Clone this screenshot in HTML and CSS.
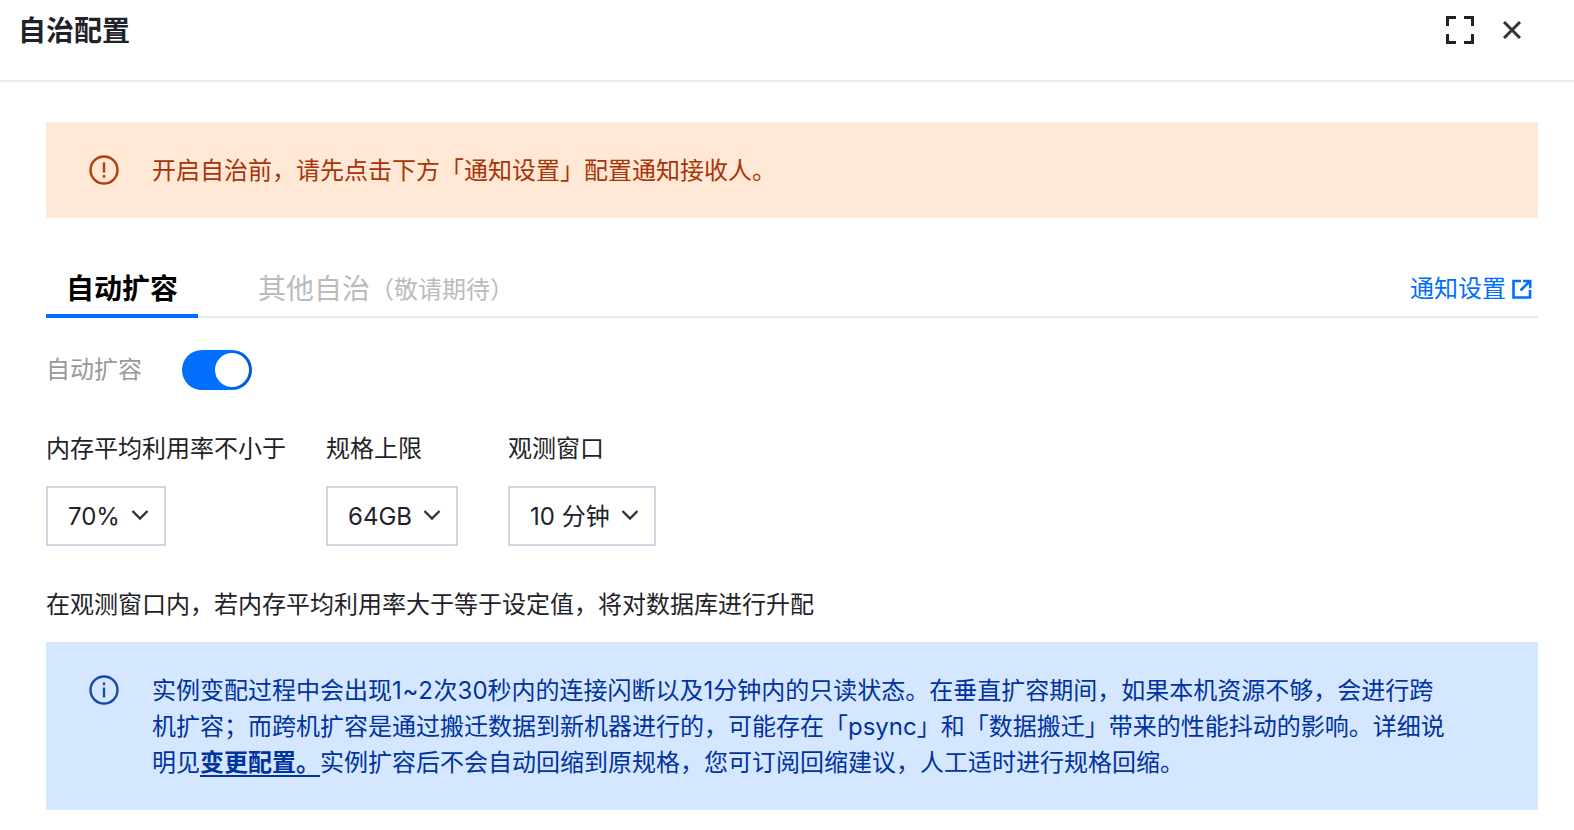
FILE: index.html
```html
<!DOCTYPE html>
<html>
<head>
    <title>自治配置</title>
    <link rel="stylesheet" href="styles.css">
</head>
<body>
    <div class="header">
        <h2>自治配置</h2>
        <div class="header-actions">
            <svg class="icon-full" width="28" height="28" viewBox="0 0 28 28" fill="none" stroke="#1f2329" stroke-width="3">
                <path d="M10 1.5H1.5V10M18 1.5H26.5V10M1.5 18V26.5H10M26.5 18V26.5H18"/>
            </svg>
            <svg class="icon-close" width="18" height="18" viewBox="0 0 18 18" fill="none" stroke="#333" stroke-width="3">
                <path d="M1 1L17 17M17 1L1 17"/>
            </svg>
        </div>
    </div>

    <div class="content">
        <div class="alert alert-warn">
            <svg class="alert-icon" width="30" height="30" viewBox="0 0 30 30" fill="none" stroke="#b43c10" stroke-width="2.4">
                <circle cx="15" cy="15" r="13.5"/>
                <path d="M15 7.5V17.5M15 20V22.8"/>
            </svg>
            <div class="alert-text">开启自治前，请先点击下方「通知设置」配置通知接收人。</div>
        </div>

        <div class="tabs">
            <div class="tab active">自动扩容</div>
            <div class="tab disabled">其他自治<span class="tab-note">（敬请期待）</span></div>
            <a class="tab-link" href="#">通知设置
                <svg width="20" height="20" viewBox="0 0 20 20" fill="none" stroke="#006eff" stroke-width="2.6">
                    <path d="M9 2H1.5V18.5H18V11M11 2H18.2V9.2M18 2L8.5 11.5"/>
                </svg>
            </a>
        </div>

        <div class="switch-row">
            <span class="switch-label">自动扩容</span>
            <span class="switch"><span class="switch-knob"></span></span>
        </div>

        <div class="fields">
            <div class="field field-rate">
                <label>内存平均利用率不小于</label>
                <div class="select">70%<svg class="caret" width="18" height="12" viewBox="0 0 18 12" fill="none" stroke="#333" stroke-width="2.4"><path d="M1.5 2L9 9.5L16.5 2"/></svg></div>
            </div>
            <div class="field field-limit">
                <label>规格上限</label>
                <div class="select">64GB<svg class="caret" width="18" height="12" viewBox="0 0 18 12" fill="none" stroke="#333" stroke-width="2.4"><path d="M1.5 2L9 9.5L16.5 2"/></svg></div>
            </div>
            <div class="field">
                <label>观测窗口</label>
                <div class="select">10 分钟<svg class="caret" width="18" height="12" viewBox="0 0 18 12" fill="none" stroke="#333" stroke-width="2.4"><path d="M1.5 2L9 9.5L16.5 2"/></svg></div>
            </div>
        </div>

        <p class="desc">在观测窗口内，若内存平均利用率大于等于设定值，将对数据库进行升配</p>

        <div class="alert alert-info">
            <svg class="alert-icon" width="30" height="30" viewBox="0 0 30 30" fill="none" stroke="#1c4aa8" stroke-width="2.4">
                <circle cx="15" cy="15" r="13.5"/>
                <path d="M15 7.5V10.3M15 12.5V22.5"/>
            </svg>
            <div class="alert-text">实例变配过程中会出现<span class="num">1~2</span>次30秒内的连接闪断以及1分钟内的只读状态。在垂直扩容期间，如果本机资源不够，会进行跨<br>机扩容；而跨机扩容是通过搬迁数据到新机器进行的，可能存在「psync」和「数据搬迁」带来的性能抖动的影响。详细说<br>明见<a href="#">变更配置。</a>实例扩容后不会自动回缩到原规格，您可订阅回缩建议，人工适时进行规格回缩。</div>
        </div>
    </div>
</body>
</html>
```

FILE: styles.css
```css
body {
    font-family: Inter, "Noto Sans CJK SC", sans-serif;
    background-color: white;
    color: #1f2329;
    margin: 0;
    overflow: hidden;
}
.header {
    display: flex;
    justify-content: space-between;
    height: 80px;
    padding: 0 53px 0 18px;
    border-bottom: 2px solid #e7eaef;
}
.header h2 {
    margin: 12px 0 0;
    font-size: 28px;
    line-height: 38px;
    font-weight: 600;
    color: #1f2329;
}
.header-actions {
    display: flex;
    align-items: flex-start;
    gap: 29px;
    padding-top: 16px;
}
.icon-close {
    margin-top: 5px;
}
.content {
    padding: 40px 36px 0 46px;
}
.alert {
    display: flex;
    align-items: flex-start;
    padding: 31px 43px 29px;
    font-size: 24px;
    line-height: 36px;
}
.alert-icon {
    flex-shrink: 0;
    margin-right: 33px;
    margin-top: 2px;
}
.alert-warn {
    background-color: #ffe8d5;
    color: #a83408;
}
.alert-info {
    background-color: #d5e7ff;
    color: #00339e;
}
.alert-info a {
    color: #00339e;
    font-weight: 600;
    text-decoration: underline;
    text-underline-offset: 4px;
}
.num {
    letter-spacing: 0.7px;
}
.tabs {
    display: flex;
    align-items: flex-end;
    height: 68px;
    margin-top: 30px;
    border-bottom: 2px solid #e7eaef;
}
.tab {
    font-size: 28px;
    line-height: 40px;
    padding: 0 20px 5px;
    margin-bottom: -2px;
    border-bottom: 4px solid transparent;
}
.tab.active {
    font-weight: 600;
    color: #000;
    border-bottom-color: #006eff;
}
.tab.disabled {
    color: #bbb;
    margin-left: 40px;
    padding-bottom: 4px;
}
.tab-note {
    font-size: 24px;
    vertical-align: 1px;
}
.tab-link {
    display: flex;
    align-items: center;
    gap: 6px;
    margin-left: auto;
    padding: 0 6px 7px 0;
    font-size: 24px;
    line-height: 40px;
    color: #006eff;
    text-decoration: none;
}
.switch-row {
    display: flex;
    align-items: center;
    margin-top: 32px;
    height: 40px;
}
.switch-label {
    font-size: 24px;
    color: #999;
    margin-right: 40px;
    padding-bottom: 6px;
}
.switch {
    display: flex;
    justify-content: flex-end;
    align-items: center;
    width: 70px;
    height: 40px;
    padding-right: 3px;
    box-sizing: border-box;
    border-radius: 20px;
    background: linear-gradient(90deg, #006eff 65%, #0058cc);
}
.switch-knob {
    width: 34px;
    height: 34px;
    border-radius: 50%;
    background: white;
}
.fields {
    display: flex;
    margin-top: 41px;
}
.field {
    margin-right: 40px;
}
.field-limit {
    margin-right: 50px;
}
.field label {
    display: block;
    font-size: 24px;
    line-height: 36px;
    margin-bottom: 19px;
}
.select {
    display: inline-flex;
    align-items: center;
    gap: 11px;
    height: 60px;
    padding: 2px 15px 0 20px;
    box-sizing: border-box;
    border: 2px solid #cfd6e3;
    font-size: 24px;
    line-height: 30px;
    color: #1f2329;
}
.caret {
    margin-bottom: 5px;
}
.desc {
    margin: 41px 0 19px;
    font-size: 24px;
    line-height: 36px;
}
```
